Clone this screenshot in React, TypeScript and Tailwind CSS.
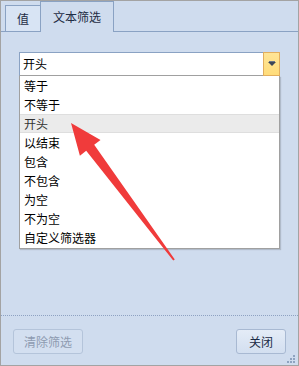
import React from "react";

const items = ["等于", "不等于", "开头", "以结束", "包含", "不包含", "为空", "不为空", "自定义筛选器"];

export default function App() {
  const font = { fontFamily: '"Noto Sans CJK SC", "Noto Sans", sans-serif' };
  return (
    <div
      className="relative w-[299px] h-[366px] bg-[#cfdcee] border border-[#a3a3a3] flex flex-col text-[12px] text-black"
      style={font}
    >
      {/* tabs */}
      <div className="h-[31px] flex items-end shrink-0">
        <div className="w-[4px] h-full border-b border-[#8aa2c3]" />
        <div className="w-[36px] h-[27px] border border-[#8aa2c3] bg-[#d8e4f4] flex items-center justify-center text-[#1f2d45] leading-none pt-px">
          值
        </div>
        <div className="-ml-px w-[74px] h-[31px] border border-b-0 border-[#8aa2c3] bg-[#cfdcee] flex items-center justify-center text-[#1f2d45] leading-none pb-[1px]">
          文本筛选
        </div>
        <div className="flex-1 h-full border-b border-[#8aa2c3]" />
      </div>

      {/* content */}
      <div className="flex-1 px-[18px] pt-[20px]">
        <div className="flex h-[24px]">
          <div className="flex-1 bg-white border-t border-l border-[#8aa2c3] border-b border-b-[#a0a0a0] flex items-center pl-[3px] leading-none">
            开头
          </div>
          <div className="w-[17px] h-[24px] border border-[#e2ae5e] bg-gradient-to-b from-[#ffe596] to-[#ffdc7a] flex items-center justify-center">
            <svg width="8" height="6" viewBox="0 0 8 6">
              <rect x="1" y="0" width="6" height="1" fill="#6a7587" />
              <polygon points="0,1 8,1 4,5" fill="#3b4556" />
            </svg>
          </div>
        </div>
        <div className="bg-white border border-t-0 border-[#a0a0a0] shadow-[1px_1px_1px_rgba(0,0,0,0.15)] pb-[1px]">
          {items.map((it) => (
            <div
              key={it}
              className={
                "h-[19px] flex items-center pl-[4px] leading-none " +
                (it === "开头" ? "bg-[#ebebeb] border-y border-[#dedede] text-[#333]" : "")
              }
            >
              {it}
            </div>
          ))}
        </div>
      </div>

      {/* footer */}
      <div className="h-[50px] shrink-0 border-t border-dotted border-[#8ea2c2] flex justify-between items-start pt-[13px] px-[12px]">
        <button className="w-[70px] h-[25px] rounded-[3px] border border-[#b4c4da] bg-[#d3dff0] text-[#8e9bb0] flex items-center justify-center leading-none">
          清除筛选
        </button>
        <button className="w-[50px] h-[25px] rounded-[3px] border border-[#a8b9d2] bg-gradient-to-b from-[#e4ecf7] to-[#d3dff0] text-[#1a2a44] flex items-center justify-center leading-none">
          关闭
        </button>
      </div>

      {/* resize grip */}
      <svg className="absolute right-[2px] bottom-[1px]" width="10" height="10" viewBox="0 0 10 10">
        <rect x="7" y="1" width="2" height="2" fill="#8ea3c0" />
        <rect x="4" y="4" width="2" height="2" fill="#8ea3c0" />
        <rect x="7" y="4" width="2" height="2" fill="#8ea3c0" />
        <rect x="1" y="7" width="2" height="2" fill="#8ea3c0" />
        <rect x="4" y="7" width="2" height="2" fill="#8ea3c0" />
        <rect x="7" y="7" width="2" height="2" fill="#8ea3c0" />
      </svg>

      {/* red arrow annotation */}
      <svg className="absolute left-[-1px] top-[-1px] pointer-events-none" width="299" height="366" viewBox="0 0 299 366">
        <polygon
          points="71,123 100.5,139.9 94.2,144.8 174.8,259.4 173.2,260.6 86.2,150.8 79.9,155.7"
          fill="#f03b3b"
        />
      </svg>
    </div>
  );
}
